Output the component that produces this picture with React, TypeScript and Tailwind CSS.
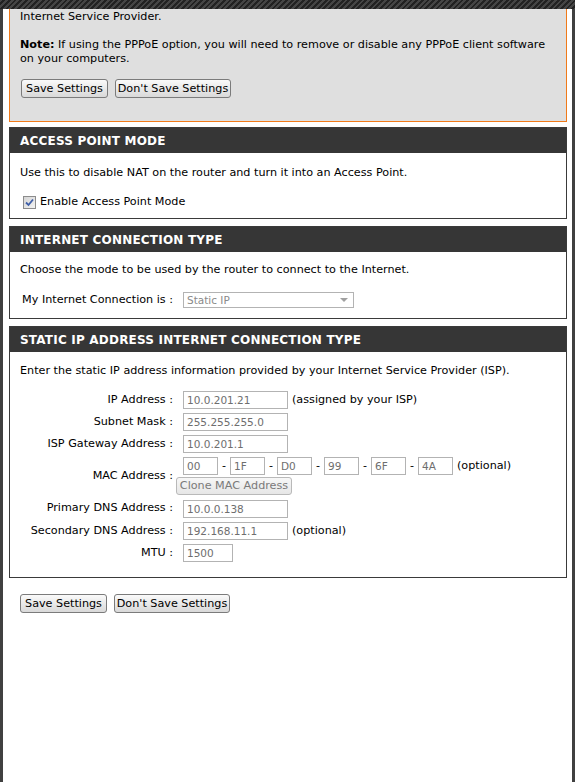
import React from "react";

const body = "font-['DejaVu_Sans',Verdana,sans-serif] text-[11.2px] leading-[14px] text-black";
const field = "h-[18px] border border-[#b3b3b3] bg-white px-[3px] text-[10.5px] text-[#6e6e6e] outline-none font-['DejaVu_Sans',Verdana,sans-serif]";

const Btn = ({ label, w }: { label: string; w: string }) => (
  <button
    type="button"
    className={`h-[19px] ${w} border border-[#7b7b7b] rounded-[3px] bg-linear-to-b from-[#fafafa] to-[#d9d9d9] text-[11.2px] leading-none text-black`}
  >
    {label}
  </button>
);

const Section = ({ title, className, children }: { title: string; className?: string; children: React.ReactNode }) => (
  <div className={`border border-[#3a3a3a] ${className ?? ""}`}>
    <div className="h-[25px] bg-[#363636] flex items-center px-[10px] text-white font-bold text-[12px] tracking-[0.2px] font-['DejaVu_Sans',Verdana,sans-serif]">
      {title}
    </div>
    {children}
  </div>
);

const Label = ({ text }: { text: string }) => (
  <div className="flex items-center justify-end h-[18px] whitespace-nowrap">{text}</div>
);

const Field = ({ value, w }: { value: string; w: string }) => (
  <input readOnly value={value} className={`${field} ${w}`} />
);

const mac = ["00", "1F", "D0", "99", "6F", "4A"];

export default function App() {
  return (
    <div className={`flex flex-col h-[782px] bg-white overflow-hidden ${body}`}>
      <div className="h-[9px] shrink-0 bg-[repeating-linear-gradient(135deg,#454545_0px,#454545_2px,#222222_2px,#222222_4px)]" />
      <div className="flex flex-1">
        <div className="w-[3px] bg-[#404040]" />
        <div className="flex-1 pl-[6px] pr-[5px]">
          {/* pppoe note box, scrolled up */}
          <div className="border-x border-b border-[#f07a1a] bg-[#dfdfdf] px-[10px] pt-[1px] pb-[23px]">
            <p>Internet Service Provider.</p>
            <p className="mt-[14px] whitespace-nowrap">
              <b>Note:</b> If using the PPPoE option, you will need to remove or disable any PPPoE client software
              <br />
              on your computers.
            </p>
            <div className="mt-[13px] ml-[1px] flex gap-[7px]">
              <Btn label="Save Settings" w="w-[87px]" />
              <Btn label="Don't Save Settings" w="w-[116px]" />
            </div>
          </div>

          <Section title="ACCESS POINT MODE" className="mt-[5px]">
            <div className="px-[10px] pt-[13px] pb-[8px]">
              <p>Use this to disable NAT on the router and turn it into an Access Point.</p>
              <label className="mt-[14px] ml-[3px] flex items-center h-[16px] gap-[4px]">
                <span className="w-[13px] h-[13px] border border-[#8c8c8c] bg-linear-to-br from-[#d6d6d6] to-[#f2f2f2] flex items-center justify-center">
                  <svg width="9" height="9" viewBox="0 0 9 9">
                    <path d="M1 4.5 L3.5 7 L8 1.5" fill="none" stroke="#3f5fa8" strokeWidth="1.8" />
                  </svg>
                </span>
                Enable Access Point Mode
              </label>
            </div>
          </Section>

          <Section title="INTERNET CONNECTION TYPE" className="mt-[7px]">
            <div className="px-[10px] pt-[11px] pb-[10px]">
              <p>Choose the mode to be used by the router to connect to the Internet.</p>
              <div className="mt-[15px] flex items-center h-[16px]">
                <span className="ml-[2px] w-[151px] text-right whitespace-nowrap">My Internet Connection is :</span>
                <div className="ml-[10px] w-[171px] h-[16px] border border-[#b3b3b3] flex items-center justify-between px-[3px] text-[10.5px] text-[#8a8a8a]">
                  <span>Static IP</span>
                  <svg width="8" height="4" viewBox="0 0 8 4" className="mr-[2px]">
                    <path d="M0 0 H8 L4 4 Z" fill="#a0a0a0" />
                  </svg>
                </div>
              </div>
            </div>
          </Section>

          <Section title="STATIC IP ADDRESS INTERNET CONNECTION TYPE" className="mt-[7px]">
            <div className="px-[10px] pt-[12px] pb-[15px]">
              <p>Enter the static IP address information provided by your Internet Service Provider (ISP).</p>
              <div className="mt-[13px] grid grid-cols-[153px_1fr] gap-x-[10px] gap-y-[4px]">
                <Label text="IP Address :" />
                <div className="flex items-center gap-[4px]">
                  <Field value="10.0.201.21" w="w-[105px]" />
                  <span>(assigned by your ISP)</span>
                </div>
                <Label text="Subnet Mask :" />
                <Field value="255.255.255.0" w="w-[105px]" />
                <Label text="ISP Gateway Address :" />
                <Field value="10.0.201.1" w="w-[105px]" />
                <div className="flex items-center justify-end">MAC Address :</div>
                <div className="flex flex-col gap-[2px] items-start">
                  <div className="flex items-center">
                    {mac.map((m, i) => (
                      <React.Fragment key={m}>
                        {i > 0 && <span className="w-[12px] text-center">-</span>}
                        <Field value={m} w="w-[35px]" />
                      </React.Fragment>
                    ))}
                    <span className="ml-[4px]">(optional)</span>
                  </div>
                  <button
                    type="button"
                    className="-ml-[7px] h-[18px] w-[116px] border border-[#b9b9b9] rounded-[3px] bg-linear-to-b from-[#f7f7f7] to-[#e6e6e6] text-[11.2px] leading-none text-[#7a7a7a]"
                  >
                    Clone MAC Address
                  </button>
                </div>
                <Label text="Primary DNS Address :" />
                <div className="pt-[1px]">
                  <Field value="10.0.0.138" w="w-[105px]" />
                </div>
                <Label text="Secondary DNS Address :" />
                <div className="flex items-center gap-[4px]">
                  <Field value="192.168.11.1" w="w-[105px]" />
                  <span>(optional)</span>
                </div>
                <Label text="MTU :" />
                <Field value="1500" w="w-[50px]" />
              </div>
            </div>
          </Section>

          <div className="mt-[16px] pl-[11px] flex gap-[7px]">
            <Btn label="Save Settings" w="w-[87px]" />
            <Btn label="Don't Save Settings" w="w-[116px]" />
          </div>
        </div>
        <div className="w-[3px] bg-[#404040]" />
      </div>
    </div>
  );
}
